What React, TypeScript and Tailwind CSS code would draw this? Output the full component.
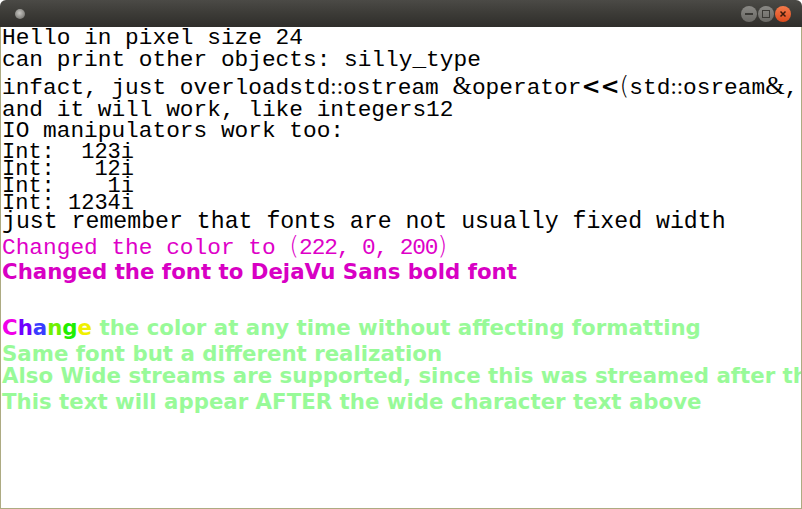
import React from "react";

const mono = "font-['Liberation_Mono','DejaVu_Sans_Mono',monospace]";
const bold = "font-['DejaVu_Sans',sans-serif] font-bold";
const serif = "font-['Liberation_Serif',serif]";

const Row = ({ className, children }: { className: string; children: React.ReactNode }) => (
  <div className={`whitespace-pre ${className}`}>{children}</div>
);

const Paren = ({ c }: { c: string }) => (
  <span className="font-['DejaVu_Sans',sans-serif] font-extralight text-[25px]">{c}</span>
);

const rainbow = [
  { ch: "C", color: "text-[#f000e8]" },
  { ch: "h", color: "text-[#7000ff]" },
  { ch: "a", color: "text-[#3a3cff]" },
  { ch: "n", color: "text-[#70f000]" },
  { ch: "g", color: "text-[#20ee00]" },
  { ch: "e", color: "text-[#f0f000]" },
];

export default function App() {
  return (
    <div className="w-[802px] h-[509px] flex flex-col bg-white overflow-hidden">
      {/* title bar */}
      <div className="h-[27px] shrink-0 rounded-t-[6px] bg-gradient-to-b from-[#4b4a46] via-[#3c3b37] to-[#2f2e2b] flex items-center justify-between px-[15px]">
        <div className="w-[10px] h-[10px] rounded-full bg-[radial-gradient(circle_at_45%_40%,#c8c7c3,#8a8985_60%,#5e5d59)]" />
        <div className="flex items-center gap-[1px] -mr-[4px] mt-[1px]">
          <div className="w-[16px] h-[16px] rounded-full bg-gradient-to-b from-[#8a8985] to-[#6a6965] flex items-center justify-center">
            <div className="w-[8px] h-[2px] bg-[#3a3935]" />
          </div>
          <div className="w-[16px] h-[16px] rounded-full bg-gradient-to-b from-[#8a8985] to-[#6a6965] flex items-center justify-center">
            <div className="w-[8px] h-[8px] border-[1.5px] border-[#3a3935]" />
          </div>
          <div className="w-[16px] h-[16px] rounded-full bg-gradient-to-b from-[#f47a4a] to-[#dc4a1c] flex items-center justify-center">
            <svg width="8" height="8" viewBox="0 0 8 8">
              <path d="M1.5 1.5 L6.5 6.5 M6.5 1.5 L1.5 6.5" stroke="#3a1a0c" strokeWidth="1.5" />
            </svg>
          </div>
        </div>
      </div>

      {/* content */}
      <div className="flex-1 border-x border-b border-[#adab82] pl-[1px] text-black overflow-hidden">
        <Row className={`${mono} text-[22.8px] h-[22px] leading-[22px]`}>Hello in pixel size 24</Row>
        <Row className={`${mono} text-[22.8px] h-[26px] leading-[22px]`}>can print other objects: silly_type</Row>
        <Row className={`${mono} text-[22.8px] h-[24px] leading-[22px]`}>
          infact, just overloadstd<span className={serif}>::</span>ostream{" "}
          <span className={`${serif} text-[25px]`}>&amp;</span>operator
          <span className="font-['DejaVu_Sans',sans-serif] font-bold">&lt;&lt;</span>
          <Paren c="(" />
          std<span className={serif}>::</span>osream
          <span className={`${serif} text-[25px]`}>&amp;</span>,
        </Row>
        <Row className={`${mono} text-[22.8px] h-[21px] leading-[22px]`}>and it will work, like integers12</Row>
        <Row className={`${mono} text-[22.8px] h-[23px] leading-[22px]`}>IO manipulators work too:</Row>
        <Row className={`${mono} text-[22px] h-[17px] leading-[20px]`}>Int:  123i</Row>
        <Row className={`${mono} text-[22px] h-[17px] leading-[20px]`}>Int:   12i</Row>
        <Row className={`${mono} text-[22px] h-[17px] leading-[20px]`}>Int:    1i</Row>
        <Row className={`${mono} text-[22px] h-[17px] leading-[20px]`}>Int: 1234i</Row>
        <Row className={`${mono} text-[23.2px] h-[22px] leading-[22px]`}>just remember that fonts are not usually fixed width</Row>
        <Row className={`${mono} text-[22.8px] h-[27px] leading-[26px] text-[#de00c8]`}>
          Changed the color to <Paren c="(" />
          <span className="tracking-[-1.1px]">222, 0, 200</span>
          <Paren c=")" />
        </Row>
        <Row className={`${bold} text-[21.3px] h-[56px] leading-[24px] text-[#d800c4]`}>Changed the font to DejaVu Sans bold font</Row>
        <Row className={`${bold} text-[21.3px] h-[26px] leading-[24px] text-[#98fa98]`}>
          {rainbow.map((r) => (
            <span key={r.ch} className={r.color}>
              {r.ch}
            </span>
          ))}{" "}
          the color at any time without affecting formatting
        </Row>
        <Row className={`${bold} text-[21.3px] h-[22px] leading-[24px] text-[#98fa98]`}>Same font but a different realization</Row>
        <Row className={`${bold} text-[21.3px] h-[26px] leading-[24px] text-[#98fa98]`}>Also Wide streams are supported, since this was streamed after th</Row>
        <Row className={`${bold} text-[21.3px] h-[26px] leading-[24px] text-[#98fa98]`}>This text will appear AFTER the wide character text above</Row>
      </div>
    </div>
  );
}
